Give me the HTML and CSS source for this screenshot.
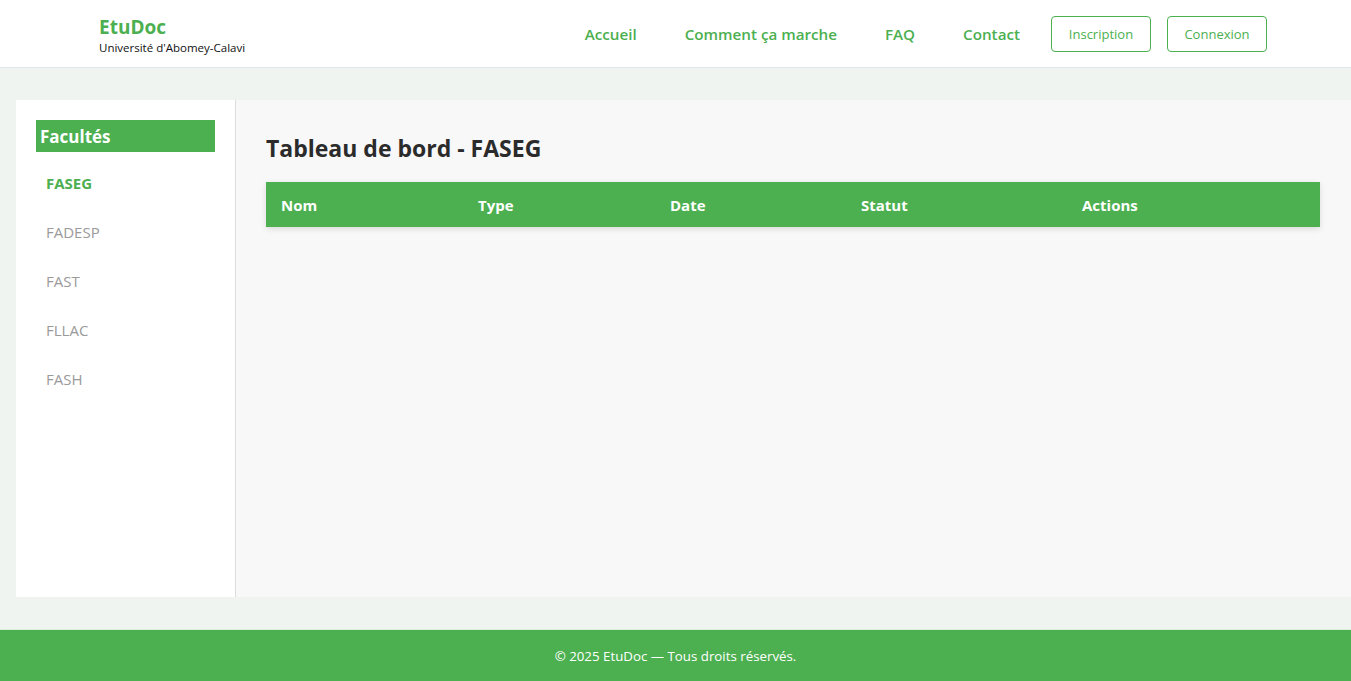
FILE: index.html
```html
<!DOCTYPE html>
<html lang="fr">
<head>
<meta charset="utf-8">
<title>EtuDoc</title>
<link rel="stylesheet" href="styles.css">
</head>
<body>
<header class="topbar">
  <div class="brand">
    <div class="brand-name">EtuDoc</div>
    <div class="brand-sub">Université d'Abomey-Calavi</div>
  </div>
  <nav class="nav">
    <a class="nav-link" href="#">Accueil</a>
    <a class="nav-link" href="#">Comment ça marche</a>
    <a class="nav-link" href="#">FAQ</a>
    <a class="nav-link" href="#">Contact</a>
    <a class="nav-btn" href="#">Inscription</a>
    <a class="nav-btn" href="#">Connexion</a>
  </nav>
</header>
<main class="page">
  <div class="panel">
    <aside class="sidebar">
      <h3 class="side-title">Facultés</h3>
      <ul class="side-list">
        <li class="side-item active">FASEG</li>
        <li class="side-item">FADESP</li>
        <li class="side-item">FAST</li>
        <li class="side-item">FLLAC</li>
        <li class="side-item">FASH</li>
      </ul>
    </aside>
    <section class="content">
      <h2 class="title">Tableau de bord - FASEG</h2>
      <table class="table">
        <thead>
          <tr>
            <th class="c-nom">Nom</th>
            <th class="c-type">Type</th>
            <th class="c-date">Date</th>
            <th class="c-statut">Statut</th>
            <th class="c-actions">Actions</th>
          </tr>
        </thead>
        <tbody></tbody>
      </table>
    </section>
  </div>
</main>
<footer class="footer">© 2025 EtuDoc — Tous droits réservés.</footer>
</body>
</html>
```
FILE: styles.css
```css
* { box-sizing: border-box; }
html, body { margin: 0; padding: 0; }
body {
  font-family: "Open Sans", "Noto Sans", sans-serif;
  background: #eff4f0;
  color: #333;
  overflow-x: hidden;
}
.topbar {
  height: 68px;
  background: #fff;
  border-bottom: 1px solid #dfe6ee;
  display: flex;
  align-items: center;
  justify-content: space-between;
  padding: 0 84px 0 99px;
}
.brand { margin-top: 4px; }
.brand-name {
  color: #4caf50;
  font-weight: 700;
  font-size: 19px;
  line-height: 22px;
}
.brand-sub {
  font-size: 11.5px;
  color: #111;
  line-height: 16px;
  margin-top: 2px;
}
.nav { display: flex; align-items: center; }
.nav-link {
  color: #4caf50;
  text-decoration: none;
  font-weight: 600;
  font-size: 15.2px;
  margin-right: 48px;
}
.nav-link:nth-child(4) { margin-right: 31px; }
.nav-btn {
  display: inline-flex;
  align-items: center;
  justify-content: center;
  width: 100px;
  height: 36px;
  border: 1px solid #4caf50;
  border-radius: 4px;
  color: #4caf50;
  text-decoration: none;
  font-size: 13px;
  font-weight: 500;
  margin-right: 16px;
  margin-top: 1px;
}
.nav-btn:last-child { margin-right: 0; }
.page {
  padding: 32px 0 32px 16px;
}
.panel {
  display: flex;
  height: 497px;
  background: #f8f8f8;
}
.sidebar {
  width: 220px;
  flex: none;
  background: #fff;
  border-right: 1px solid #dcdcdc;
  padding: 20px 20px;
}
.side-title {
  margin: 0;
  background: #4caf50;
  color: #fff;
  font-size: 17px;
  font-weight: 700;
  height: 32px;
  line-height: 34px;
  padding-left: 4px;
}
.side-list {
  list-style: none;
  margin: 19px 0 0;
  padding: 0 10px;
}
.side-item {
  font-size: 15px;
  color: #9a9a9a;
  height: 49px;
  line-height: 24px;
}
.side-item.active {
  color: #4caf50;
  font-weight: 700;
}
.content {
  flex: 1;
  padding: 30px 31px 30px 30px;
}
.title {
  margin: 2px 0 18px;
  font-size: 23px;
  font-weight: 700;
  color: #2b2b2b;
  line-height: 32px;
}
.table {
  width: 100%;
  border-collapse: collapse;
  box-shadow: 0 2px 6px rgba(0,0,0,0.12);
}
.table th {
  background: #4caf50;
  color: #fff;
  text-align: left;
  font-size: 15px;
  font-weight: 700;
  height: 45px;
  padding: 0 15px;
}
.c-nom { width: 197px; }
.c-type { width: 192px; }
.c-date { width: 191px; }
.c-statut { width: 221px; }
.footer {
  background: #4caf50;
  border-top: 1px solid #d9efd9;
  color: #fff;
  text-align: center;
  font-size: 13.3px;
  height: 52px;
  line-height: 52px;
}
```
